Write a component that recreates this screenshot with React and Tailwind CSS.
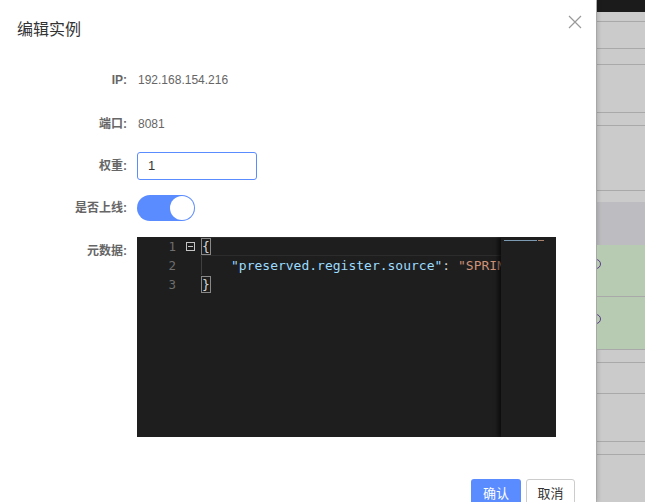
import React from "react";

const cjk = { fontFamily: '"Liberation Sans","Noto Sans CJK SC",sans-serif' };
const mono = { fontFamily: '"DejaVu Sans Mono",monospace' };

function RightStrip() {
  const seg = "border-b border-[#a9a9a9]";
  return (
    <div className="w-[49px] h-[502px] flex flex-col bg-[#cbcbcb] border-l border-[#bdbdbd] overflow-hidden">
      <div className="h-[12px] bg-[#1b1b1b] shrink-0" />
      <div className={`h-[10px] shrink-0 ${seg}`} />
      <div className={`h-[27px] shrink-0 ${seg}`} />
      <div className={`h-[16px] shrink-0 ${seg}`} />
      <div className={`h-[48px] shrink-0 ${seg}`} />
      <div className={`h-[13px] shrink-0 ${seg}`} />
      <div className={`h-[65px] shrink-0 ${seg}`} />
      <div className="h-[11px] shrink-0" />
      <div className="h-[43px] shrink-0 bg-[#bdbdc1]" />
      <div className={`h-[52px] shrink-0 bg-[#b6cbb1] ${seg} relative`}>
        <div className="absolute left-[-6px] top-[14px] w-[10px] h-[10px] rounded-full border border-[#5a3d8a]" />
      </div>
      <div className={`h-[53px] shrink-0 bg-[#b6cbb1] ${seg} relative`}>
        <div className="absolute left-[-6px] top-[17px] w-[10px] h-[10px] rounded-full border border-[#5a3d8a]" />
      </div>
      <div className={`h-[13px] shrink-0 ${seg}`} />
      <div className={`h-[31px] shrink-0 ${seg}`} />
      <div className={`h-[48px] shrink-0 ${seg}`} />
      <div className={`h-[13px] shrink-0 ${seg}`} />
      <div className="flex-1" />
    </div>
  );
}

function Editor() {
  const lines = [1, 2, 3];
  return (
    <div className="w-[419px] h-[200px] bg-[#1e1e1e] flex overflow-hidden" style={mono}>
      <div className="w-[63px] shrink-0 flex flex-col text-[12.5px] leading-[19px]">
        {lines.map((n) => (
          <div key={n} className="h-[19px] flex items-center">
            <span className="w-[39px] text-right text-[#6e6e6e]">{n}</span>
            {n === 1 ? (
              <span className="ml-[10px] w-[9px] h-[9px] border border-[#c5c5c5] flex items-center justify-center">
                <span className="w-[5px] h-px bg-[#c5c5c5]" />
              </span>
            ) : null}
          </div>
        ))}
      </div>
      <div className="flex-1 relative overflow-hidden text-[13px] leading-[19px] whitespace-pre">
        <div className="h-[19px] border-y border-[#2c2c2c] flex items-center">
          <span className="border border-[#888] leading-[15px] text-[#d4d4d4] ml-[1px]">{"{"}</span>
        </div>
        <div className="h-[19px] flex items-center border-l border-[#404040] ml-[1px]">
          <span className="ml-[29px] text-[#9cdcfe]">"preserved.register.source"</span>
          <span className="text-[#d4d4d4]">: </span>
          <span className="text-[#ce9178]">"SPRING_CLOUD"</span>
        </div>
        <div className="h-[19px] flex items-center">
          <span className="border border-[#888] leading-[15px] text-[#d4d4d4] ml-[1px]">{"}"}</span>
        </div>
      </div>
      <div className="w-[55px] shrink-0 bg-[#1e1e1e] shadow-[-3px_0_4px_rgba(0,0,0,0.6)] relative">
        <div className="absolute left-[3px] top-[3px] w-[33px] h-[1px] bg-[#7d9ab3]" />
        <div className="absolute left-[37px] top-[3px] w-[6px] h-[1px] bg-[#a8826c]" />
      </div>
    </div>
  );
}

export default function App() {
  return (
    <div className="w-[645px] h-[502px] flex overflow-hidden bg-white" style={cjk}>
      <div className="w-[596px] h-[502px] bg-white flex flex-col overflow-hidden relative shadow-[2px_0_4px_rgba(0,0,0,0.15)]">
        <div className="h-[44px] mt-[8px] shrink-0 flex items-center justify-between pl-[17px] pr-[14px]">
          <span className="text-[16px] text-[#333]">编辑实例</span>
          <svg width="14" height="14" viewBox="0 0 14 14" className="mt-[-16px]">
            <path d="M1 1L13 13M13 1L1 13" stroke="#999" strokeWidth="1.2" />
          </svg>
        </div>
        <div className="flex flex-col shrink-0 mt-[18px] text-[12px]">
          <div className="h-[20px] shrink-0 flex items-center">
            <span className="w-[127px] text-right font-bold text-[#666]">IP:</span>
            <span className="ml-[11px] text-[#666]">192.168.154.216</span>
          </div>
          <div className="h-[20px] shrink-0 mt-[24px] flex items-center">
            <span className="w-[127px] text-right font-bold text-[#666]">端口:</span>
            <span className="ml-[11px] text-[#666]">8081</span>
          </div>
          <div className="h-[28px] shrink-0 mt-[18px] flex items-center">
            <span className="w-[127px] text-right font-bold text-[#666]">权重:</span>
            <div className="ml-[10px] w-[120px] h-[28px] border border-[#5b8cff] rounded-[3px] flex items-center pl-[10px] text-[13px] text-[#333]">1</div>
          </div>
          <div className="h-[26px] shrink-0 mt-[15px] flex items-center">
            <span className="w-[127px] text-right font-bold text-[#666]">是否上线:</span>
            <div className="ml-[10px] w-[58px] h-[26px] rounded-full bg-[#5b8cff] relative">
              <div className="absolute right-[1px] top-[1px] w-[24px] h-[24px] rounded-full bg-white" />
            </div>
          </div>
          <div className="mt-[16px] shrink-0 flex items-start">
            <span className="w-[127px] text-right font-bold text-[#666] leading-[28px]">元数据:</span>
            <div className="ml-[10px]">
              <Editor />
            </div>
          </div>
        </div>
        <div className="flex shrink-0 justify-end gap-[5px] pr-[21px] mt-[42px]">
          <div className="w-[50px] h-[30px] rounded-[3px] bg-[#5b8cff] text-white text-[13px] flex items-center justify-center">确认</div>
          <div className="w-[49px] h-[30px] rounded-[3px] border border-[#ccc] bg-white text-[#333] text-[13px] flex items-center justify-center">取消</div>
        </div>
      </div>
      <RightStrip />
    </div>
  );
}
